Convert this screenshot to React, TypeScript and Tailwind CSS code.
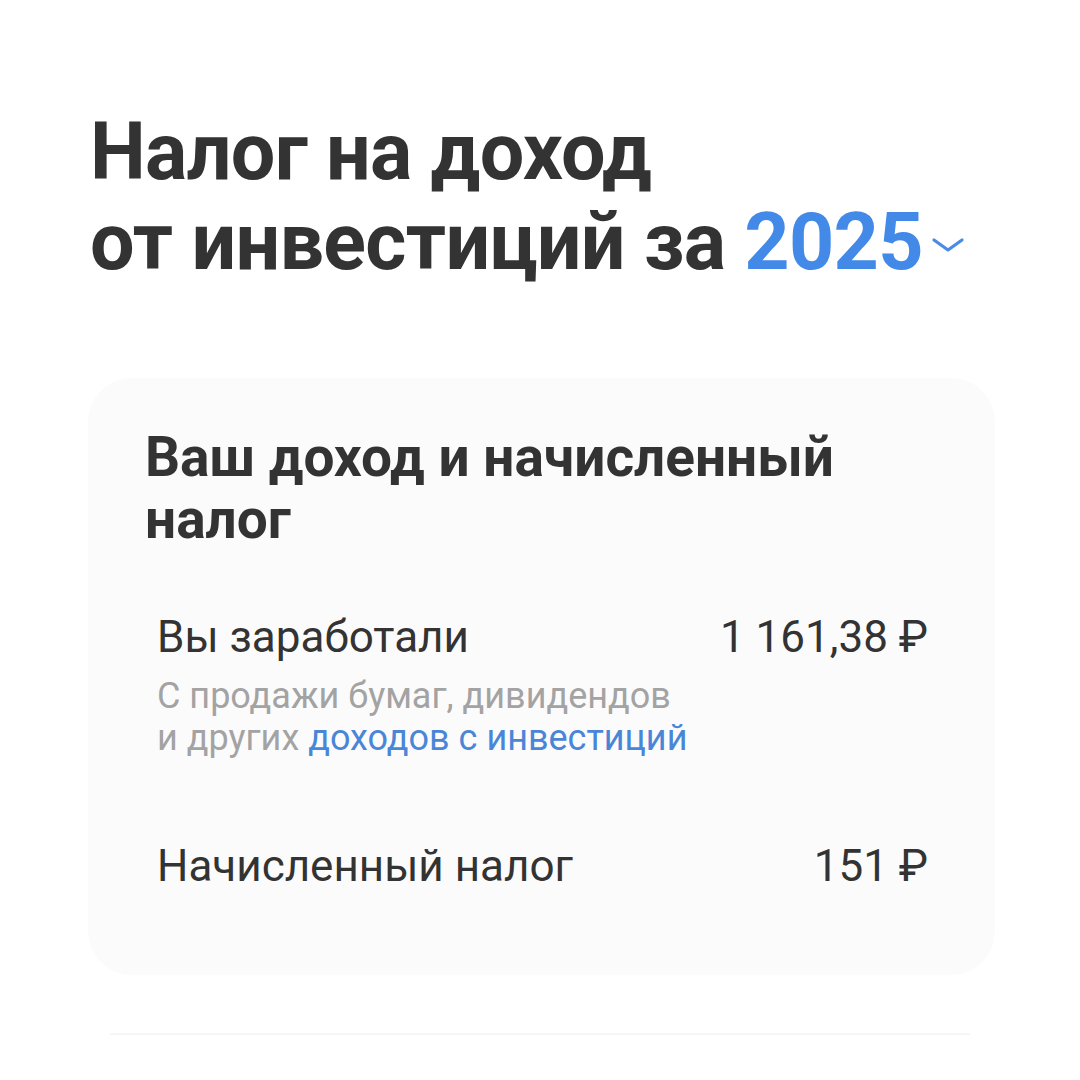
import React from "react";

function Chevron() {
  return (
    <svg width="34" height="18" viewBox="0 0 34 18" fill="none" className="ml-[8px] mt-[6px]">
      <path d="M3 4 L17 14 L31 4" stroke="#4a8be6" strokeWidth="3.2" strokeLinecap="round" strokeLinejoin="round" />
    </svg>
  );
}

export default function App() {
  return (
    <div className="w-[1080px] h-[1080px] bg-white overflow-hidden" style={{ fontFamily: "Roboto, 'Noto Sans', sans-serif" }}>
      <div className="pt-[107px] pl-[90px]">
        <h1 className="text-[79px] leading-[90px] font-bold text-[#333333] tracking-[-0.7px]">
          <div>Налог на доход</div>
          <div className="flex items-center">
            <span>от инвестиций за&nbsp;</span>
            <span className="text-[#438ae8]">2025</span>
            <Chevron />
          </div>
        </h1>
      </div>

      <div className="mt-[91px] ml-[88px] mr-[85px] rounded-[44px] bg-[#fcfbfc] pt-[48px] pb-[84px] pl-[57px] pr-[67px]">
        <h2 className="text-[55px] leading-[62px] font-bold text-[#333333]">
          Ваш доход и начисленный
          <br />
          налог
        </h2>

        <div className="mt-[62px] pl-[12px]">
          <div className="flex justify-between items-start">
            <div>
              <div className="text-[44px] leading-[50px] text-[#333333]">Вы заработали</div>
              <div className="mt-[13px] text-[36px] leading-[42px] text-[#a3a3a3]">
                С продажи бумаг, дивидендов
                <br />
                и других <span className="text-[#4a86d8]">доходов с инвестиций</span>
              </div>
            </div>
            <div className="text-[44px] leading-[50px] text-[#333333]">1 161,38 ₽</div>
          </div>

          <div className="mt-[82px] flex justify-between items-start">
            <div className="text-[44px] leading-[50px] text-[#333333]">Начисленный налог</div>
            <div className="text-[44px] leading-[50px] text-[#333333]">151 ₽</div>
          </div>
        </div>
      </div>

      <div className="mt-[58px] mx-[110px] h-[2px] bg-[#f7f6f7]" />
    </div>
  );
}
